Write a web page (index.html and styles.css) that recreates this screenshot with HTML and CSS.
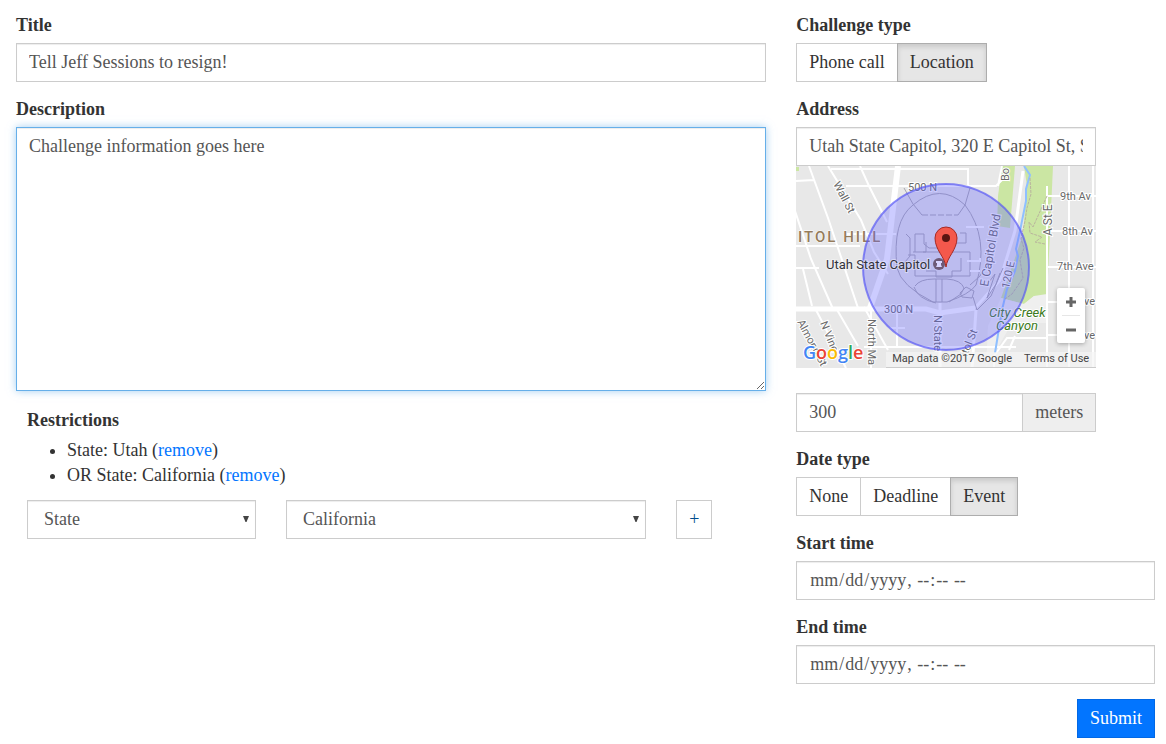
FILE: index.html
```html
<!DOCTYPE html>
<html lang="en">
<head>
<meta charset="utf-8">
<title>Edit challenge</title>
<link rel="stylesheet" href="styles.css">
</head>
<body>
<form class="challenge">
  <div class="main">
    <div class="group">
      <label class="label" for="title">Title</label>
      <input class="control" id="title" type="text" value="Tell Jeff Sessions to resign!">
    </div>
    <div class="group">
      <label class="label" for="description">Description</label>
      <textarea class="control area" id="description" rows="10">Challenge information goes here</textarea>
    </div>
    <section class="restrictions">
      <h2 class="label">Restrictions</h2>
      <ul class="list">
        <li>State: Utah (<a href="#">remove</a>)</li>
        <li>OR State: California (<a href="#">remove</a>)</li>
      </ul>
      <div class="picker">
        <div class="select">
          <select class="control" aria-label="Restriction type"><option>State</option></select>
          <svg class="arrow" viewBox="0 0 6 6" aria-hidden="true"><path d="M0 0H6L3.500 6H2.500Z"/></svg>
        </div>
        <div class="select">
          <select class="control" aria-label="Restriction value"><option>California</option></select>
          <svg class="arrow" viewBox="0 0 6 6" aria-hidden="true"><path d="M0 0H6L3.500 6H2.500Z"/></svg>
        </div>
        <div><button class="btn add" type="button" aria-label="Add restriction">+</button></div>
      </div>
    </section>
  </div>

  <div class="side">
    <div class="group">
      <span class="label" id="kind">Challenge type</span>
      <div class="buttons" role="group" aria-labelledby="kind">
        <button class="btn" type="button" aria-pressed="false">Phone call</button>
        <button class="btn active" type="button" aria-pressed="true">Location</button>
      </div>
    </div>
    <div class="place">
      <label class="label" for="address">Address</label>
      <input class="control" id="address" type="text" value="Utah State Capitol, 320 E Capitol St, Salt Lake City, UT">
      <div class="map">
        <svg class="canvas" viewBox="0 0 300 202" preserveAspectRatio="xMidYMid slice" role="img" aria-label="Map of Utah State Capitol">
          <rect width="300" height="202" fill="#e8e8e8"/>
          <g fill="#cbe6a3">
            <path d="M206 0H219L214 62L201 60L202 30Z"/>
            <path d="M228 0H257L251 132L238 130L228 138L205 132L218 95L227 68L231 20Z"/>
            <path d="M0 1H3V5H0Z"/>
          </g>
          <path d="M205 132L228 138L238 130L251 128V157H216L190 202L192 160Z" fill="#efefef"/>
          <g fill="none" stroke="#fff" stroke-width="2">
            <path d="M0 15L18 14M13 0L32 52L62 142M-1 45L15 93L37 143M32 0L65 54L78 86L92 108M64 0L73 20L91 56M35 3H172V20M50 20H200L206 14M73 20H98M23 102H0M0 80H64M48 68H100M7 103L16 140M19 142L50 202M40 142L62 180M75 142V202M101 142V180M68 181H220M206 0L202 20M94 162H109"/>
            <path d="M251 20V202M273 0V202M297 0V202M250 30H300M250 65H300M251 101H300M251 136H300M251 169H300"/>
            <path d="M251 172H211L198 190V202M219 170L213 184M68 141L92 184"/>
          </g>
          <g fill="none" stroke="#fff" stroke-width="6">
            <path d="M102 0L97 42L91 93L74 142"/>
            <path d="M0 143H130L144 147L179 142" stroke-width="5"/>
            <path d="M144 137V202M180 144L176 202M227 5L219 65L204 114L179 142" stroke-width="3"/>
          </g>
          <path d="M228 0L234 9L230 23V35L224 65L220 83L222 90L219 105L211 123L206 144L199 187" fill="none" stroke="#8fc0ff" stroke-width="2"/>
          <path d="M234 12L235 28L231 42L229 55L225 73L228 82L224 94L227 112L216 128L209 133M251 30L237 61L233 56L234 67L246 71L239 76L249 78" fill="none" stroke="#b9b49d" stroke-dasharray="3 1"/>
          <g fill="none" stroke="#a7a6ad">
            <path d="M108 22L117 38L126 49M162 49L169 39L174 22M117 39Q144 16 169 39Q194 72 180 119Q174 128 151 136H137Q105 120 101 102Q96 55 117 39M110 68L114 72V90L104 102"/>
            <path d="M126 49H162" stroke-dasharray="6 2"/>
            <path d="M119 68H128V78L133 82H145V69H155V77H170V67H164M117 86H130V76M119 68V86M127 86H174V110H119V89L112 89M130 105H140V111H156V105H165V92"/>
            <path d="M140 113V136M146 113V136M119 120Q124 113 138 113H151Q165 114 168 122L165 128L153 136M118 121Q122 133 140 137M164 127L170 121L178 125L176 132L166 131ZM174 119L184 110L194 92M177 131L181 144L195 130L207 102M190 120L199 108L191 132L200 118L204 107"/>
          </g>
          <path d="M170 61H188M171 95H184V92M174 105H184" fill="none" stroke="#fff" stroke-width="2"/>
          <g font-family="Roboto, sans-serif" fill="#696969">
            <g font-size="11" stroke="#fff" stroke-width="2" paint-order="stroke">
              <text x="112" y="25">500 N</text>
              <text x="88" y="147">300 N</text>
              <text x="264" y="34">9th Av</text>
              <text x="266" y="69">8th Av</text>
              <text x="261" y="104">7th Ave</text>
              <text x="288" y="139">ve</text>
              <text x="288" y="173">ve</text>
              <text transform="translate(37 18) rotate(62)">Wall St</text>
              <text transform="translate(72 153) rotate(90)">North Ma</text>
              <text transform="translate(138 149) rotate(90)">N State</text>
              <text transform="translate(24 157) rotate(68)">N Vine</text>
              <text transform="translate(1 156) rotate(62)">Almond St</text>
              <text transform="translate(192 121) rotate(-80)" font-size="12">E Capitol Blvd</text>
              <text transform="translate(213 123) rotate(-78)">120 E</text>
              <text transform="translate(213 15) rotate(-90)">Bo</text>
              <text transform="translate(256 70) rotate(-90)" font-size="12">A St E</text>
              <text transform="translate(171 191) rotate(-68)">itol St</text>
            </g>
            <text x="2" y="76" font-size="15" font-weight="500" fill="#957b5b" stroke="#fff" stroke-width="1" paint-order="stroke" class="district">ITOL HILL</text>
            <g font-size="13" font-style="italic" fill="#3c7a20" stroke="#fff" stroke-width="2" paint-order="stroke">
              <text x="193" y="151">City Creek</text>
              <text x="200" y="164">Canyon</text>
            </g>
          </g>
          <circle cx="150" cy="101" r="83" fill="#6464ff" fill-opacity=".33" stroke="#5555f5" stroke-opacity=".68" stroke-width="2"/>
          <text x="30" y="103" font-family="Roboto, sans-serif" font-size="13" fill="#33333d" stroke="#fff" stroke-opacity=".4" stroke-width="2" paint-order="stroke">Utah State Capitol</text>
          <circle cx="143" cy="98" r="6" fill="#6e5a78"/>
          <path d="M140 95H146V97H145V99L146 101H140L141 99V97H140Z" fill="#d9d4ff"/>
          <path d="M150 101C149 91 139 84 139 72A11 11 0 0 1 161 72C161 84 151 91 150 101Z" fill="#f4584c" stroke="#a62a24"/>
          <circle cx="150" cy="72" r="4" fill="#5c1511"/>
          <g font-family="'Open Sans', sans-serif" font-size="18" font-weight="600" stroke="#fff" stroke-width="2" paint-order="stroke">
            <text x="7" y="193"><tspan fill="#4285f4">G</tspan><tspan fill="#ea4335">o</tspan><tspan fill="#fbbc05">o</tspan><tspan fill="#4285f4">g</tspan><tspan fill="#34a853">l</tspan><tspan fill="#ea4335">e</tspan></text>
          </g>
        </svg>
        <div class="zoom">
          <button class="zoom-btn" type="button" aria-label="Zoom in"><svg viewBox="0 0 12 12"><path d="M6 1V11M1 6H11"/></svg></button>
          <button class="zoom-btn" type="button" aria-label="Zoom out"><svg viewBox="0 0 12 12"><path d="M1 6H11"/></svg></button>
        </div>
        <div class="credit"><span>Map data ©2017 Google</span><a href="#">Terms of Use</a></div>
      </div>
      <div class="radius">
        <input class="control" type="text" value="300" aria-label="Radius in meters">
        <span class="unit">meters</span>
      </div>
    </div>
    <div class="group">
      <span class="label" id="dates">Date type</span>
      <div class="buttons" role="group" aria-labelledby="dates">
        <button class="btn" type="button" aria-pressed="false">None</button>
        <button class="btn" type="button" aria-pressed="false">Deadline</button>
        <button class="btn active" type="button" aria-pressed="true">Event</button>
      </div>
    </div>
    <div class="group">
      <label class="label" for="start">Start time</label>
      <input class="control date" id="start" type="datetime-local">
    </div>
    <div class="group">
      <label class="label" for="end">End time</label>
      <input class="control date" id="end" type="datetime-local">
    </div>
    <div class="actions"><button class="btn submit" type="submit">Submit</button></div>
  </div>
</form>
</body>
</html>
```
FILE: styles.css
```css
* { box-sizing: border-box; }

body {
  margin: 0;
  background: #fff;
  color: #333;
  font: 18px/25px "Liberation Serif", serif;
}

a { color: #0275ff; text-decoration: none; }

.challenge {
  display: grid;
  grid-template-columns: 23fr 11fr;
  gap: 30px;
  padding: 13px 11px 6px 16px;
}

.main, .side { min-width: 0; }

.group { margin-bottom: 15px; }

.label {
  display: block;
  margin: 0 0 5px;
  font-size: 18px;
  font-weight: bold;
}

.control {
  display: block;
  width: 100%;
  height: 39px;
  margin: 0;
  padding: 6px 12px;
  border: 1px solid #ccc;
  border-radius: 0;
  background: #fff;
  box-shadow: inset 0 1px 1px rgba(0, 0, 0, .075);
  color: #555;
  font: inherit;
  outline: 0;
}

.area {
  height: auto;
  resize: vertical;
  border-color: #66afe9;
  box-shadow: inset 0 1px 1px rgba(0, 0, 0, .075), 0 0 8px rgba(102, 175, 233, .6);
}

.restrictions { padding: 2px 0 0 11px; }

.list { margin: 0 0 12px; padding-left: 40px; }

.picker {
  display: grid;
  grid-template-columns: 229fr 360fr 90fr;
  gap: 30px;
}

.select { position: relative; }

.select .control { appearance: none; padding-left: 16px; }

.arrow {
  position: absolute;
  top: 16px;
  right: 7px;
  width: 6px;
  height: 6px;
  fill: #444;
  pointer-events: none;
}

.btn {
  height: 39px;
  margin: 0;
  padding: 6px 12px;
  border: 1px solid #ccc;
  border-radius: 0;
  background: #fff;
  color: #333;
  font: inherit;
}

.add { width: 36px; color: #014c8c; }

.buttons { display: flex; }

.buttons .btn + .btn { margin-left: -1px; }

.btn.active {
  border-color: #adadad;
  background: #e6e6e6;
  box-shadow: inset 0 3px 5px rgba(0, 0, 0, .125);
}

.place { max-width: 300px; margin-bottom: 15px; }

.map {
  position: relative;
  margin-bottom: 25px;
  overflow: hidden;
}

.canvas { display: block; width: 100%; }

.district { letter-spacing: 2px; }

.zoom {
  position: absolute;
  right: 11px;
  bottom: 25px;
  width: 28px;
  padding: 0 5px;
  border-radius: 2px;
  background: #fff;
  box-shadow: 0 1px 4px rgba(0, 0, 0, .3);
}

.zoom-btn {
  display: flex;
  align-items: center;
  justify-content: center;
  width: 100%;
  height: 27px;
  padding: 0;
  border: 0;
  background: none;
}

.zoom-btn + .zoom-btn { border-top: 1px solid #e6e6e6; height: 28px; }

.zoom-btn svg { width: 12px; height: 12px; stroke: #666; stroke-width: 3; }

.credit {
  position: absolute;
  right: 0;
  bottom: 0;
  display: flex;
  gap: 12px;
  padding: 0 7px 1px 6px;
  border-bottom: 1px solid #ccc;
  background: rgba(245, 245, 245, .7);
  color: #444;
  font: 11px/14px Roboto, sans-serif;
}

.credit a { color: inherit; }

.radius { display: flex; }

.radius .control { flex: 1; min-width: 0; border-right: 0; }

.unit {
  padding: 6px 12px;
  border: 1px solid #ccc;
  background: #eee;
  color: #555;
}

.date::-webkit-calendar-picker-indicator { display: none; }

.actions { display: flex; justify-content: flex-end; }

.submit { border-color: #0268e5; background: #0275ff; color: #fff; }
```
